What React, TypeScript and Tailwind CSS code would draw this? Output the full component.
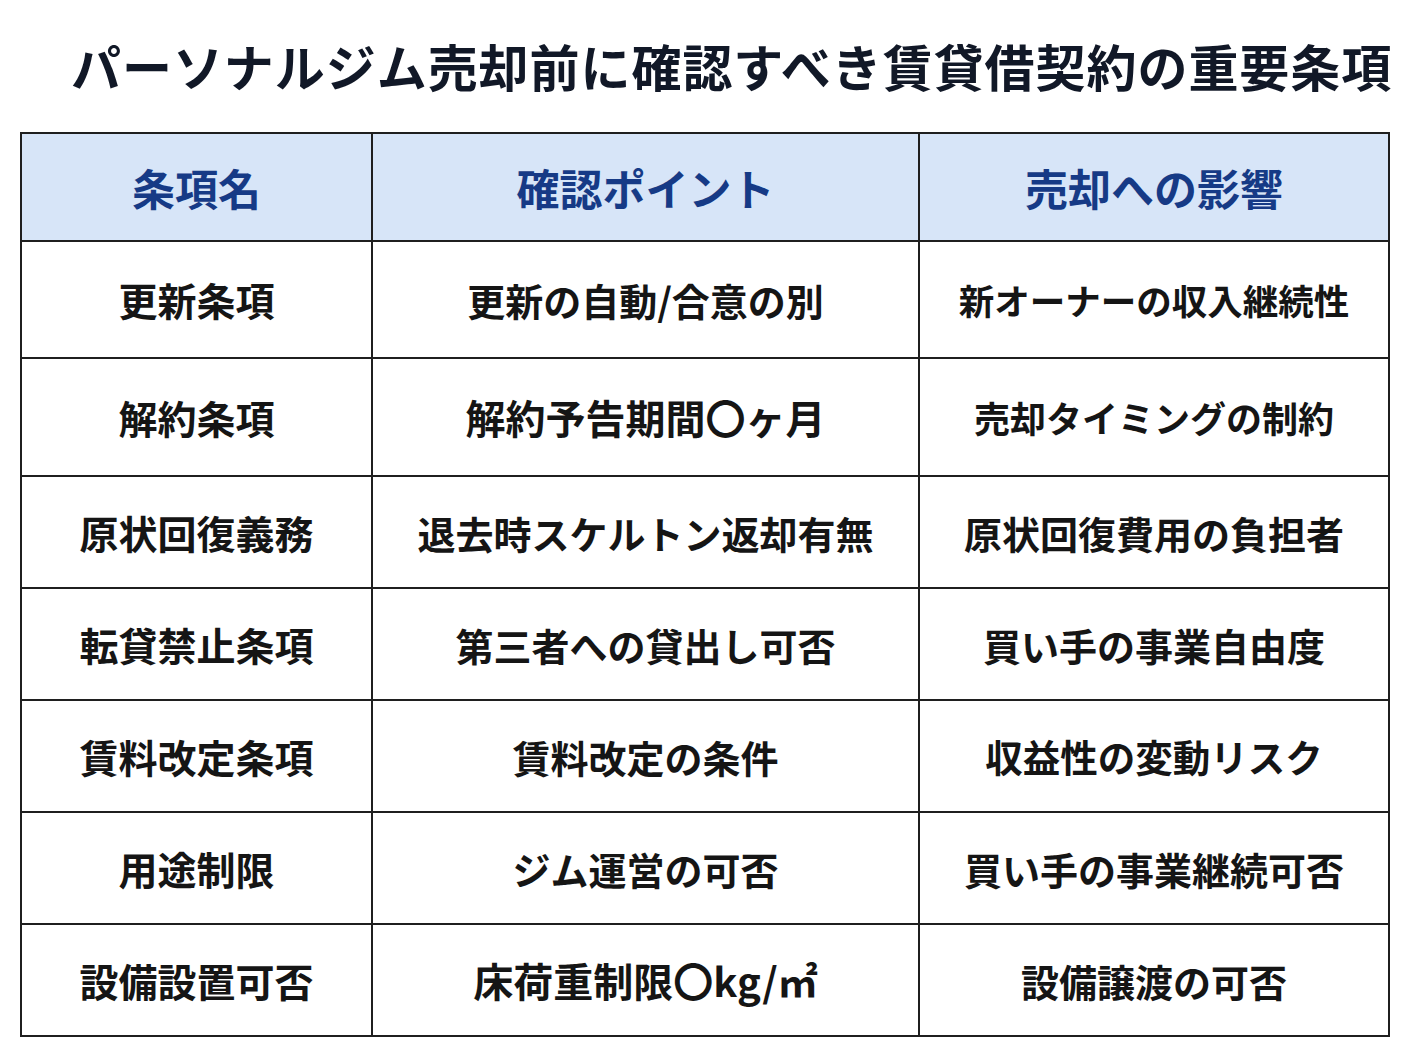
import React from 'react';

const rows: { h: string; name: string; point: string; pointSize: string; impact: string; impactSize: string }[] = [
  { h: 'h-[117px]', name: '更新条項', point: '更新の自動/合意の別', pointSize: 'text-[38px]', impact: '新オーナーの収入継続性', impactSize: 'text-[35.5px]' },
  { h: 'h-[118px]', name: '解約条項', point: '解約予告期間〇ヶ月', pointSize: 'text-[40px]', impact: '売却タイミングの制約', impactSize: 'text-[36px]' },
  { h: 'h-[112px]', name: '原状回復義務', point: '退去時スケルトン返却有無', pointSize: 'text-[38px]', impact: '原状回復費用の負担者', impactSize: 'text-[38px]' },
  { h: 'h-[112px]', name: '転貸禁止条項', point: '第三者への貸出し可否', pointSize: 'text-[38px]', impact: '買い手の事業自由度', impactSize: 'text-[38px]' },
  { h: 'h-[112px]', name: '賃料改定条項', point: '賃料改定の条件', pointSize: 'text-[38px]', impact: '収益性の変動リスク', impactSize: 'text-[37.5px]' },
  { h: 'h-[112px]', name: '用途制限', point: 'ジム運営の可否', pointSize: 'text-[38px]', impact: '買い手の事業継続可否', impactSize: 'text-[38px]' },
  { h: 'h-[112px]', name: '設備設置可否', point: '床荷重制限〇kg/㎡', pointSize: 'text-[40px]', impact: '設備譲渡の可否', impactSize: 'text-[38px]' },
];

export default function App() {
  return (
    <div className="w-[1408px] h-[1056px] bg-white font-['Noto_Sans_CJK_JP','Noto_Sans',sans-serif] overflow-hidden">
      <h1 className="pl-[71px] pt-[30px] h-[132px] text-[50px] leading-[70px] font-bold text-[#111827] whitespace-nowrap tracking-[0.95px]">
        パーソナルジム売却前に確認すべき賃貸借契約の重要条項
      </h1>
      <div className="px-[20px]">
        <table className="w-[1368px] border-collapse table-fixed">
          <colgroup>
            <col className="w-[351px]" />
            <col className="w-[547px]" />
            <col className="w-[470px]" />
          </colgroup>
          <thead>
            <tr className="h-[108px] bg-[#d7e5f8]">
              {['条項名', '確認ポイント', '売却への影響'].map((t) => (
                <th key={t} className="border-2 border-[#1f1f1f] text-center text-[43px] font-bold text-[#163a86]">
                  {t}
                </th>
              ))}
            </tr>
          </thead>
          <tbody>
            {rows.map((r) => (
              <tr key={r.name} className={r.h}>
                <td className="border-2 border-[#1f1f1f] text-center text-[39px] font-bold text-[#151515]">{r.name}</td>
                <td className={`border-2 border-[#1f1f1f] text-center font-bold text-[#151515] whitespace-nowrap ${r.pointSize}`}>{r.point}</td>
                <td className={`border-2 border-[#1f1f1f] text-center font-bold text-[#151515] whitespace-nowrap ${r.impactSize}`}>{r.impact}</td>
              </tr>
            ))}
          </tbody>
        </table>
      </div>
    </div>
  );
}
